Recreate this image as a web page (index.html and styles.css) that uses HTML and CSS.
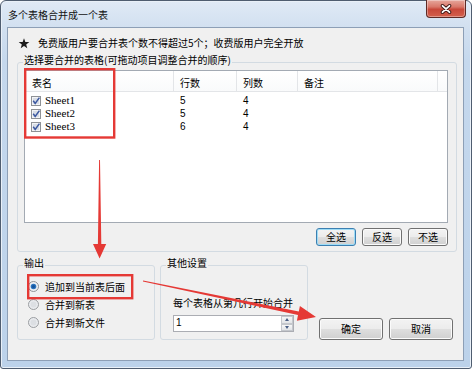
FILE: index.html
```html
<!DOCTYPE html>
<html lang="zh-CN">
<head>
    <meta charset="UTF-8">
    <meta name="viewport" content="width=device-width, initial-scale=1.0">
    <title>多个表格合并成一个表</title>
    <link rel="stylesheet" href="styles.css">
</head>
<body>

<div class="screen">
    <div class="window">
        <div class="titlebar">
            <span class="title">多个表格合并成一个表</span>
            <button class="close-btn" title="关闭">
                <svg width="16" height="10" viewBox="0 0 16 10">
                    <path d="M4.5 1.8 L11.5 8.2 M11.5 1.8 L4.5 8.2" stroke="#3f1a17" stroke-width="3.6" stroke-linecap="round"/>
                    <path d="M4.5 1.8 L11.5 8.2 M11.5 1.8 L4.5 8.2" stroke="#fff" stroke-width="1.8" stroke-linecap="round"/>
                </svg>
            </button>
        </div>

        <div class="client">
            <div class="notice">
                <svg class="star" width="12" height="11" viewBox="0 0 11 11">
                    <polygon points="5.5,0.2 6.85,3.94 10.83,4.07 7.69,6.51 8.79,10.33 5.5,8.1 2.21,10.33 3.31,6.51 0.17,4.07 4.15,3.94" fill="#1c1c1c"/>
                </svg>
                <span>免费版用户要合并表个数不得超过5个；收费版用户完全开放</span>
            </div>

            <fieldset class="group sheets">
                <legend>选择要合并的表格(可拖动项目调整合并的顺序)</legend>
                <div class="group-body">
                    <div class="listview">
                        <div class="lv-row lv-head">
                            <span>表名</span><span>行数</span><span>列数</span><span>备注</span><span></span>
                        </div>
                        <div class="lv-body">
                            <div class="lv-row">
                                <span class="name"><svg class="check" width="10" height="10" viewBox="0 0 10 10"><rect x="0.5" y="0.5" width="9" height="9" fill="#f3f4f6" stroke="#8f9296"/><rect x="2" y="2" width="6" height="6" fill="#d8dde6"/><path d="M2.2 4.8 L4.2 7.4 L8.4 1.6" fill="none" stroke="#3b58a0" stroke-width="1.5"/></svg>Sheet1</span>
                                <span>5</span><span>4</span><span></span>
                            </div>
                            <div class="lv-row">
                                <span class="name"><svg class="check" width="10" height="10" viewBox="0 0 10 10"><rect x="0.5" y="0.5" width="9" height="9" fill="#f3f4f6" stroke="#8f9296"/><rect x="2" y="2" width="6" height="6" fill="#d8dde6"/><path d="M2.2 4.8 L4.2 7.4 L8.4 1.6" fill="none" stroke="#3b58a0" stroke-width="1.5"/></svg>Sheet2</span>
                                <span>5</span><span>4</span><span></span>
                            </div>
                            <div class="lv-row">
                                <span class="name"><svg class="check" width="10" height="10" viewBox="0 0 10 10"><rect x="0.5" y="0.5" width="9" height="9" fill="#f3f4f6" stroke="#8f9296"/><rect x="2" y="2" width="6" height="6" fill="#d8dde6"/><path d="M2.2 4.8 L4.2 7.4 L8.4 1.6" fill="none" stroke="#3b58a0" stroke-width="1.5"/></svg>Sheet3</span>
                                <span>6</span><span>4</span><span></span>
                            </div>
                        </div>
                    </div>
                    <div class="list-actions">
                        <button class="btn btn-small btn-default">全选</button>
                        <button class="btn btn-small">反选</button>
                        <button class="btn btn-small">不选</button>
                    </div>
                </div>
            </fieldset>

            <div class="lower">
                <fieldset class="group output">
                    <legend>输出</legend>
                    <div class="group-body">
                        <label class="radio">
                            <svg width="11" height="11" viewBox="0 0 11 11"><circle cx="5.5" cy="5.5" r="5" fill="#eef0f3" stroke="#8f9296"/><circle cx="5.5" cy="5.5" r="2.8" fill="#2b73bd"/><circle cx="5.5" cy="5.5" r="1.5" fill="#14539a"/></svg>
                            追加到当前表后面
                        </label>
                        <label class="radio">
                            <svg width="11" height="11" viewBox="0 0 11 11"><circle cx="5.5" cy="5.5" r="5" fill="#e9ebee" stroke="#9a9da1"/><circle cx="5.5" cy="5.5" r="3" fill="#dcdfe3"/></svg>
                            合并到新表
                        </label>
                        <label class="radio">
                            <svg width="11" height="11" viewBox="0 0 11 11"><circle cx="5.5" cy="5.5" r="5" fill="#e9ebee" stroke="#9a9da1"/><circle cx="5.5" cy="5.5" r="3" fill="#dcdfe3"/></svg>
                            合并到新文件
                        </label>
                    </div>
                </fieldset>

                <fieldset class="group other">
                    <legend>其他设置</legend>
                    <div class="group-body">
                        <div class="field-label">每个表格从第几行开始合并</div>
                        <div class="spin">
                            <span class="spin-value">1</span>
                            <span class="spin-arrows"><i class="up"></i><i class="down"></i></span>
                        </div>
                    </div>
                </fieldset>

                <div class="dialog-actions">
                    <button class="btn btn-dialog">确定</button>
                    <button class="btn btn-dialog">取消</button>
                </div>
            </div>
        </div>
    </div>

    <!-- red markup drawn over the dialog -->
    <svg class="marks" width="472" height="369" viewBox="0 0 472 369">
        <rect x="25.2" y="69.2" width="89" height="68.3" fill="none" stroke="#e53935" stroke-width="2.4"/>
        <rect x="28.2" y="275.2" width="104" height="23" fill="none" stroke="#e53935" stroke-width="2.4"/>
        <polygon points="99.1,160 100,160 101.3,244 106.2,244 99.6,258.5 93,244 97.9,244" fill="#e53935"/>
        <polygon points="143.1,280.6 298.8,311.5 299.9,306 316,317 296.9,320.7 298,315.1 142.9,281.4" fill="#e53935"/>
    </svg>
</div>

</body>
</html>
```

FILE: styles.css
```css
* {
    box-sizing: border-box;
}

body {
    margin: 0;
    font-family: "Noto Sans CJK SC", "Noto Sans", sans-serif;
    font-size: 10px;
    color: #000;
    background: #fff;
}

.screen {
    position: relative;
    width: 472px;
    height: 369px;
    overflow: hidden;
}

/* window frame */
.window {
    display: flex;
    flex-direction: column;
    width: 472px;
    height: 369px;
    padding: 0 7px 7px 6px;
    border: 1px solid #4f5d70;
    border-radius: 6px 6px 3px 3px;
    background: linear-gradient(180deg, #e0eaf6 0, #d2e0f0 26px, #c5d8ed 60px, #bcd2ea 100%);
    box-shadow: inset 0 0 0 1px #e9f0f8;
}

.titlebar {
    display: flex;
    justify-content: space-between;
    align-items: flex-start;
    height: 26px;
    padding-left: 1px;
}

.title {
    line-height: 27px;
    color: #111;
}

.close-btn {
    display: flex;
    align-items: center;
    justify-content: center;
    width: 40px;
    height: 18px;
    margin: -1px -2px 0 0;
    padding: 0;
    border: 1px solid #5e2a25;
    border-top: none;
    border-radius: 0 0 4px 4px;
    background: linear-gradient(180deg, #e6a79c 0%, #d9786a 40%, #c8483a 55%, #d3604c 100%);
    box-shadow: inset 0 0 0 1px rgba(255, 255, 255, 0.35);
}

.client {
    flex: 1;
    padding: 8px 6px 0 9px;
    border: 1px solid #8d9fb6;
    background: #f0f0f0;
}

.notice {
    display: flex;
    align-items: center;
    height: 14px;
    padding-left: 1px;
    line-height: 12px;
}

.star {
    margin-right: 8px;
}

/* group boxes */
.group {
    margin: 0;
    padding: 0;
    min-width: 0;
    border: 1px solid #d3dbe2;
    border-radius: 3px;
}

.group legend {
    margin-left: 5px;
    padding: 0 1px 4px;
    line-height: 12px;
}

.sheets {
    width: 440px;
    margin-top: 4px;
}

.sheets .group-body {
    padding: 0 8px 5px 6px;
}

/* list view */
.listview {
    width: 424px;
    height: 153px;
    border: 1px solid #a3aab3;
    background: #fff;
}

.lv-row {
    display: grid;
    grid-template-columns: 149px 63px 61px 140px 9px;
}

.lv-head {
    height: 21px;
    border-bottom: 1px solid #e3e5e8;
    background: linear-gradient(180deg, #fff 0%, #f9fafb 100%);
}

.lv-head span {
    padding: 6px 0 0 6px;
    line-height: 12px;
    border-right: 1px solid #e3e5e8;
}

.lv-head span:first-child {
    padding-left: 7px;
}

.lv-head span:last-child {
    border-right: none;
}

.lv-body {
    padding-top: 2px;
    font-family: "Liberation Sans", Arial, sans-serif;
}

.lv-body .lv-row {
    height: 13px;
    line-height: 13px;
}

.lv-body span {
    padding-left: 6px;
}

.lv-body .name {
    display: flex;
    align-items: center;
    font-family: "Liberation Serif", serif;
    font-size: 11px;
}

.check {
    margin-right: 4px;
}

.list-actions {
    display: flex;
    justify-content: flex-end;
    gap: 6px;
    margin-top: 5px;
}

/* buttons */
.btn {
    padding: 0;
    font: inherit;
    line-height: 12px;
    color: #000;
    border: 1px solid #707070;
    border-radius: 3px;
    background: linear-gradient(180deg, #f3f3f3 0%, #ececec 48%, #dedede 52%, #d0d0d0 100%);
    box-shadow: inset 0 0 0 1px #fbfbfb;
}

.btn-small {
    width: 40px;
    height: 18px;
}

.btn-default {
    border-color: #3c7fb1;
    box-shadow: inset 0 0 0 1px #9edcf6;
}

.btn-dialog {
    width: 64px;
    height: 22px;
}

/* lower part */
.lower {
    display: flex;
    margin-top: 5px;
}

.output {
    width: 138px;
}

.output .group-body {
    padding: 4px 0 8px 10px;
}

.radio {
    display: flex;
    align-items: center;
    height: 18px;
}

.radio svg {
    margin-right: 6px;
}

.other {
    width: 148px;
    margin-left: 5px;
}

.other .group-body {
    padding: 24px 12px 7px 12px;
}

.field-label {
    line-height: 12px;
}

.spin {
    display: flex;
    width: 121px;
    height: 17px;
    margin-top: 6px;
    border: 1px solid #abadb3;
    background: #fff;
}

.spin-value {
    flex: 1;
    padding: 1px 0 0 2px;
    line-height: 12px;
    font-family: "Liberation Sans", Arial, sans-serif;
}

.spin-arrows {
    display: flex;
    flex-direction: column;
    width: 12px;
}

.spin-arrows i {
    flex: 1;
    display: flex;
    align-items: center;
    justify-content: center;
    border: 1px solid #c4c7cc;
    background: linear-gradient(180deg, #f7f7f7, #e2e4e7);
}

.spin-arrows .up::after {
    content: "";
    border-left: 2.5px solid transparent;
    border-right: 2.5px solid transparent;
    border-bottom: 3px solid #4a5f85;
}

.spin-arrows .down::after {
    content: "";
    border-left: 2.5px solid transparent;
    border-right: 2.5px solid transparent;
    border-top: 3px solid #4a5f85;
}

.dialog-actions {
    display: flex;
    align-self: flex-end;
    gap: 6px;
    margin-left: 11px;
}

/* annotation overlay */
.marks {
    position: absolute;
    top: 0;
    left: 0;
    pointer-events: none;
}
```
